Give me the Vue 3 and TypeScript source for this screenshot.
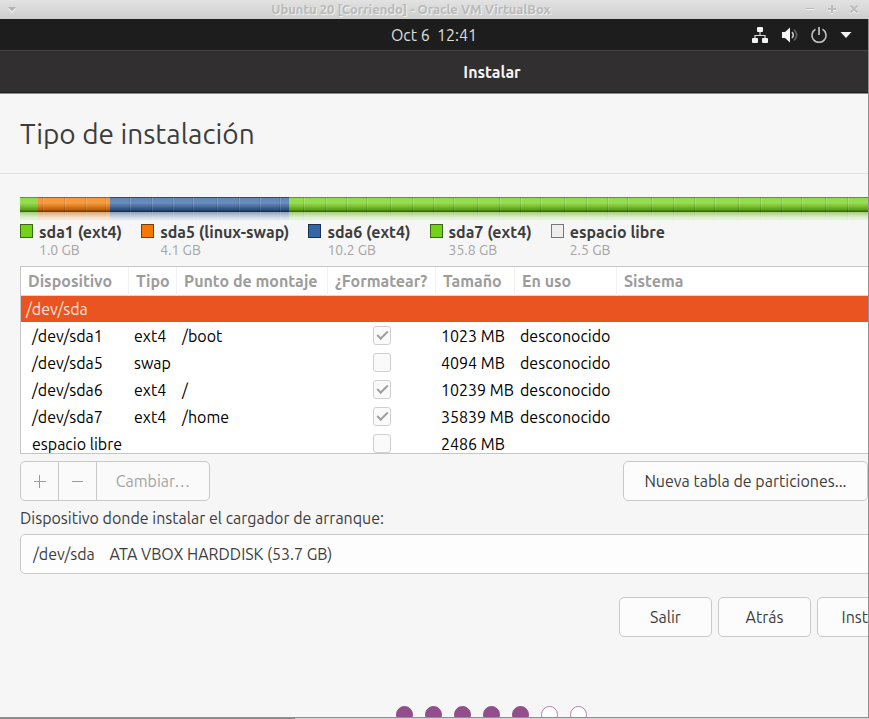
<script setup lang="ts">
import { computed, ref } from 'vue'

interface Partition {
  name: string
  label: string
  type: string
  mount: string
  format: boolean
  size: string
  used: string
  capacity: number
  tone: string
}

const partitions: Partition[] = [
  { name: '/dev/sda1', label: 'sda1 (ext4)', type: 'ext4', mount: '/boot', format: true, size: '1023 MB', used: 'desconocido', capacity: 1.0, tone: 'green' },
  { name: '/dev/sda5', label: 'sda5 (linux-swap)', type: 'swap', mount: '', format: false, size: '4094 MB', used: 'desconocido', capacity: 4.1, tone: 'orange' },
  { name: '/dev/sda6', label: 'sda6 (ext4)', type: 'ext4', mount: '/', format: true, size: '10239 MB', used: 'desconocido', capacity: 10.2, tone: 'blue' },
  { name: '/dev/sda7', label: 'sda7 (ext4)', type: 'ext4', mount: '/home', format: true, size: '35839 MB', used: 'desconocido', capacity: 35.8, tone: 'green' },
  { name: 'espacio libre', label: 'espacio libre', type: '', mount: '', format: false, size: '2486 MB', used: '', capacity: 2.5, tone: 'free' },
]

const columns = ['Dispositivo', 'Tipo', 'Punto de montaje', '¿Formatear?', 'Tamaño', 'En uso', 'Sistema']
const totalSteps = 7
const currentStep = ref(5)
const steps = computed(() => Array.from({ length: totalSteps }, (_, i) => i < currentStep.value))
const bootDevice = ref('sda')
</script>

<template>
  <div class="vm">
    <header class="vm-title">
      <button class="vm-btn" aria-label="Menú de la ventana">
        <svg width="10" height="8" viewBox="0 0 10 8"><path d="M1 2.5L5 7.5L9 2.5" fill="#f2f2f2" /><path d="M1 1H9L5 5.5Z" fill="#b4b4b4" /></svg>
      </button>
      <h1 class="vm-name">Ubuntu 20 [Corriendo] - Oracle VM VirtualBox</h1>
      <div class="vm-controls">
        <button class="vm-btn" aria-label="Minimizar">
          <svg width="10" height="10" viewBox="0 0 10 10"><path d="M1 4.5H9" stroke="#f2f2f2" /><path d="M1 3.5H9" stroke="#b8b8b8" /></svg>
        </button>
        <button class="vm-btn" aria-label="Maximizar">
          <svg width="10" height="10" viewBox="0 0 10 10"><path d="M1 5H9M5 1V9" stroke="#f2f2f2" stroke-width="2" /><path d="M1 4H9M5 0V8" stroke="#bcbcbc" stroke-width="2" /></svg>
        </button>
        <button class="vm-btn" aria-label="Cerrar">
          <svg width="10" height="10" viewBox="0 0 10 10"><path d="M1.5 1.500L8.500 8.500M8.500 1.500L1.500 8.500" stroke="#f2f2f2" stroke-width="2" /><path d="M1.500 0.500L8.500 7.500M8.500 0.500L1.500 7.500" stroke="#bcbcbc" stroke-width="2" /></svg>
        </button>
      </div>
    </header>

    <div class="guest">
      <div class="topbar">
        <time class="clock">Oct 6&nbsp; 12:41</time>
        <div class="tray">
          <svg width="18" height="16" viewBox="0 0 18 16">
            <path d="M9 5V8.5M4 11V8.5H14V11" fill="none" stroke="#d8d8d8" stroke-width="1.2" />
            <rect x="6" y="0" width="6" height="5" rx="1" fill="#f4f4f4" />
            <rect x="1" y="11" width="6" height="5" rx="1" fill="#f4f4f4" />
            <rect x="11" y="11" width="6" height="5" rx="1" fill="#f4f4f4" />
          </svg>
          <svg width="16" height="16" viewBox="0 0 16 16">
            <path d="M0 5H3L8 0.5V15.500L3 11H0Z" fill="#f4f4f4" />
            <path d="M10 5Q12.600 8 10 11" fill="none" stroke="#c8c8c8" stroke-width="1.600" />
            <path d="M12 2.500Q17.500 8 12 13.500" fill="none" stroke="#606060" stroke-width="1.600" />
          </svg>
          <svg width="16" height="16" viewBox="0 0 16 16">
            <path d="M4.500 2.300A7 7 0 1 0 11.500 2.300" fill="none" stroke="#c0c0c0" stroke-width="1.600" />
            <path d="M8 0V8" stroke="#d8d8d8" stroke-width="1.500" />
          </svg>
          <svg width="12" height="6" viewBox="0 0 12 6"><path d="M0.500 0H11.500L6 6Z" fill="#f4f4f4" /></svg>
        </div>
      </div>

      <div class="installer">
        <div class="installer-title">Instalar</div>
        <h2 class="heading">Tipo de instalación</h2>

        <main class="content">
          <div class="disk-bar">
            <div v-for="p in partitions" :key="p.name" class="segment" :class="p.tone" :style="{ flexGrow: p.capacity }"></div>
          </div>

          <ul class="legend">
            <li v-for="p in partitions" :key="p.name">
              <span class="swatch" :class="p.tone"></span>
              <div>
                <div class="legend-name">{{ p.label }}</div>
                <div class="legend-size">{{ p.capacity.toFixed(1) }} GB</div>
              </div>
            </li>
          </ul>

          <div class="table-frame">
            <table>
              <colgroup>
                <col class="c-device" /><col class="c-type" /><col class="c-mount" /><col class="c-format" /><col class="c-size" /><col class="c-used" /><col />
              </colgroup>
              <thead>
                <tr><th v-for="c in columns" :key="c" scope="col">{{ c }}</th></tr>
              </thead>
              <tbody>
                <tr class="selected"><td colspan="7">/dev/sda</td></tr>
                <tr v-for="p in partitions" :key="p.name">
                  <td class="device">{{ p.name }}</td>
                  <td>{{ p.type }}</td>
                  <td>{{ p.mount }}</td>
                  <td class="format"><input type="checkbox" :checked="p.format" disabled :aria-label="'Formatear ' + p.name" /></td>
                  <td>{{ p.size }}</td>
                  <td>{{ p.used }}</td>
                  <td></td>
                </tr>
              </tbody>
            </table>
          </div>

          <div class="actions">
            <div class="linked">
              <button class="icon-btn" disabled aria-label="Añadir">
                <svg width="14" height="14" viewBox="0 0 14 14"><path d="M1 7.500H13M6.500 1V14" stroke="#9a9a9a" /></svg>
              </button>
              <button class="icon-btn" disabled aria-label="Quitar">
                <svg width="14" height="14" viewBox="0 0 14 14"><path d="M1 7.500H12" stroke="#9a9a9a" /></svg>
              </button>
              <button class="change" disabled>Cambiar…</button>
            </div>
            <button class="new-table">Nueva tabla de particiones...</button>
          </div>

          <label class="boot-label" for="boot">Dispositivo donde instalar el cargador de arranque:</label>
          <select id="boot" v-model="bootDevice">
            <option value="sda">/dev/sda&nbsp;&nbsp;&nbsp; ATA VBOX HARDDISK (53.7 GB)</option>
          </select>

          <div class="nav">
            <button>Salir</button>
            <button>Atrás</button>
            <button class="install">Instalar ahora</button>
          </div>

          <div class="steps">
            <span v-for="(done, i) in steps" :key="i" class="dot" :class="{ done }"></span>
          </div>
        </main>
      </div>
    </div>
    <div class="vm-edge"></div>
  </div>
</template>

<style>
body {
  margin: 0;
}
</style>

<style scoped>
* {
  box-sizing: border-box;
}
.vm {
  display: flex;
  flex-direction: column;
  height: 100vh;
  overflow: hidden;
  font-family: Ubuntu, "Noto Sans", sans-serif;
  font-size: 16px;
  line-height: 20px;
  color: #3d3d3d;
}
button {
  font: inherit;
  color: inherit;
  padding: 0;
}
svg {
  display: block;
}
.vm-title {
  display: grid;
  grid-template-columns: 1fr auto 1fr;
  align-items: center;
  height: 19px;
  flex: none;
  padding: 0 10px 0 7px;
  background: linear-gradient(#e2e2e2, #cecece);
}
.vm-btn {
  border: 0;
  background: none;
  justify-self: start;
}
.vm-name {
  margin: 0;
  padding-right: 44px;
  font-size: 13px;
  line-height: 17px;
  font-weight: 700;
  color: #b9b9b9;
  text-shadow: 1px 1px 0 #f0f0f0;
  white-space: nowrap;
}
.vm-controls {
  display: flex;
  gap: 12px;
  justify-self: end;
}
.guest {
  flex: 1;
  min-height: 0;
  overflow: hidden;
  border-right: 1px solid #8f8f8f;
  border-bottom: 1px solid #8f8f8f;
  background: #1d1d1d;
}
.vm-edge {
  flex: none;
  height: 1px;
  background: linear-gradient(90deg, #8a8a8a 34%, #d4d4d4 34%);
}
.topbar {
  display: grid;
  grid-template-columns: 1fr auto 1fr;
  align-items: center;
  height: 31px;
  padding: 0 16px;
  color: #dedede;
}
.clock {
  grid-column: 2;
}
.tray {
  display: flex;
  align-items: center;
  justify-self: end;
  gap: 13px;
}
.installer {
  width: calc(100% + 116px);
  min-height: 100%;
  background: #f6f6f6;
}
.installer-title {
  height: 44px;
  border-top: 1px solid #454344;
  border-bottom: 1px solid #8f8f8f;
  box-shadow: inset 0 -1px #1e1d1d;
  background: #322f30;
  color: #f4f4f4;
  font-weight: 700;
  line-height: 42px;
  text-align: center;
}
.heading {
  margin: 0;
  height: 80px;
  padding: 0 20px;
  border-bottom: 1px solid #e2e2e2;
  font-size: 28px;
  line-height: 80px;
  font-weight: 400;
}
.content {
  padding: 23px 20px 0;
}
.disk-bar {
  display: flex;
  position: relative;
  height: 24px;
}
.disk-bar::after {
  content: "";
  position: absolute;
  inset: 0;
  background:
    linear-gradient(transparent 15px, rgba(246, 246, 246, 0.5) 15px, #f6f6f6),
    linear-gradient(rgba(0, 0, 0, 0.25) 1px, rgba(255, 255, 255, 0.22) 1px, rgba(255, 255, 255, 0.26) 6px, rgba(0, 0, 0, 0.24) 13px, rgba(0, 0, 0, 0.5) 14px, rgba(0, 0, 0, 0.5) 15px, rgba(0, 0, 0, 0.3) 15px, transparent 20px),
    repeating-linear-gradient(90deg, transparent 0 22px, rgba(0, 0, 0, 0.14) 22px 23px, rgba(255, 255, 255, 0.15) 23px 24px, transparent 24px 44px, rgba(0, 0, 0, 0.14) 44px 45px, rgba(255, 255, 255, 0.15) 45px 46px, transparent 46px 65px, rgba(0, 0, 0, 0.14) 65px 66px, rgba(255, 255, 255, 0.15) 66px 67px, transparent 67px 85px, rgba(0, 0, 0, 0.14) 85px 86px, rgba(255, 255, 255, 0.15) 86px 87px);
}
.segment {
  flex-basis: 0;
}
.green {
  background: #73d216;
}
.orange {
  background: #f57900;
}
.blue {
  background: #3465a4;
}
.free {
  background: #eeeeee;
}
.legend {
  display: flex;
  gap: 19px;
  margin: 0;
  padding: 0;
  height: 45px;
  list-style: none;
}
.legend li {
  display: flex;
  gap: 6px;
}
.swatch {
  width: 13px;
  height: 14px;
  margin-top: 3px;
  border: 1px solid rgba(0, 0, 0, 0.5);
}
.legend-name {
  font-weight: 700;
  line-height: 22px;
}
.legend-size {
  font-size: 14px;
  line-height: 15px;
  color: #a5a5a5;
}
.table-frame {
  height: 188px;
  overflow: hidden;
  border: 1px solid #c6c6c6;
  background: #fff;
}
table {
  width: 100%;
  table-layout: fixed;
  border-collapse: separate;
  border-spacing: 0;
}
.c-device { width: 108px; }
.c-type { width: 48px; }
.c-mount { width: 151px; }
.c-format { width: 108px; }
.c-size { width: 79px; }
.c-used { width: 102px; }
th {
  height: 29px;
  padding: 0 0 0 7px;
  border-right: 1px solid #f2f2f2;
  border-bottom: 1px solid #d8d8d8;
  color: #9c9c9c;
  text-align: left;
  white-space: nowrap;
}
td {
  height: 27px;
  padding: 0 0 0 5px;
  color: #000;
  white-space: nowrap;
}
td.device {
  padding-left: 11px;
}
.selected td {
  height: 26px;
  background: #e95420;
  color: #fbe4dc;
}
td.format {
  padding: 0;
}
input[type="checkbox"] {
  appearance: none;
  display: block;
  width: 18px;
  height: 19px;
  margin: 0 auto;
  border: 1px solid #cfcfcf;
  border-radius: 3px;
  background: #fafafa;
}
input[type="checkbox"]:checked::before {
  content: "";
  display: block;
  box-sizing: border-box;
  width: 11px;
  height: 6px;
  margin: 4px 0 0 3px;
  border: solid #a0a0a0;
  border-width: 0 0 2px 2px;
  transform: rotate(-45deg);
}
.actions {
  display: flex;
  justify-content: space-between;
  margin-top: 7px;
  padding-right: 96px;
}
.linked {
  display: flex;
}
.actions button,
.nav button {
  height: 40px;
  border: 1px solid #c9c9c9;
  border-radius: 5px;
  background: #fcfcfc;
}
.linked button {
  color: #a5a5a5;
  background: #fafafa;
}
.linked .icon-btn {
  display: grid;
  place-items: center;
  width: 39px;
  margin-right: -1px;
  border-radius: 5px 0 0 5px;
}
.linked .icon-btn + .icon-btn {
  border-radius: 0;
}
.linked .change {
  width: 114px;
  border-radius: 0 5px 5px 0;
}
.new-table {
  width: 245px;
}
.boot-label {
  display: block;
  height: 33px;
  line-height: 34px;
}
select {
  appearance: none;
  display: block;
  width: 100%;
  height: 40px;
  padding: 0 12px;
  border: 1px solid #c9c9c9;
  border-radius: 5px;
  background: #fdfdfd;
  color: inherit;
  font: inherit;
}
.nav {
  display: flex;
  justify-content: flex-end;
  gap: 6px;
  margin-top: 23px;
}
.nav button {
  width: 93px;
}
.nav .install {
  width: 147px;
}
.steps {
  display: flex;
  justify-content: center;
  gap: 12px;
  margin-top: 69px;
  padding-right: 2px;
}
.dot {
  width: 17px;
  height: 17px;
  border: 1px solid #b57fae;
  border-radius: 50%;
  background: #fff;
}
.dot.done {
  border-color: #924d8b;
  background: #924d8b;
}
</style>
